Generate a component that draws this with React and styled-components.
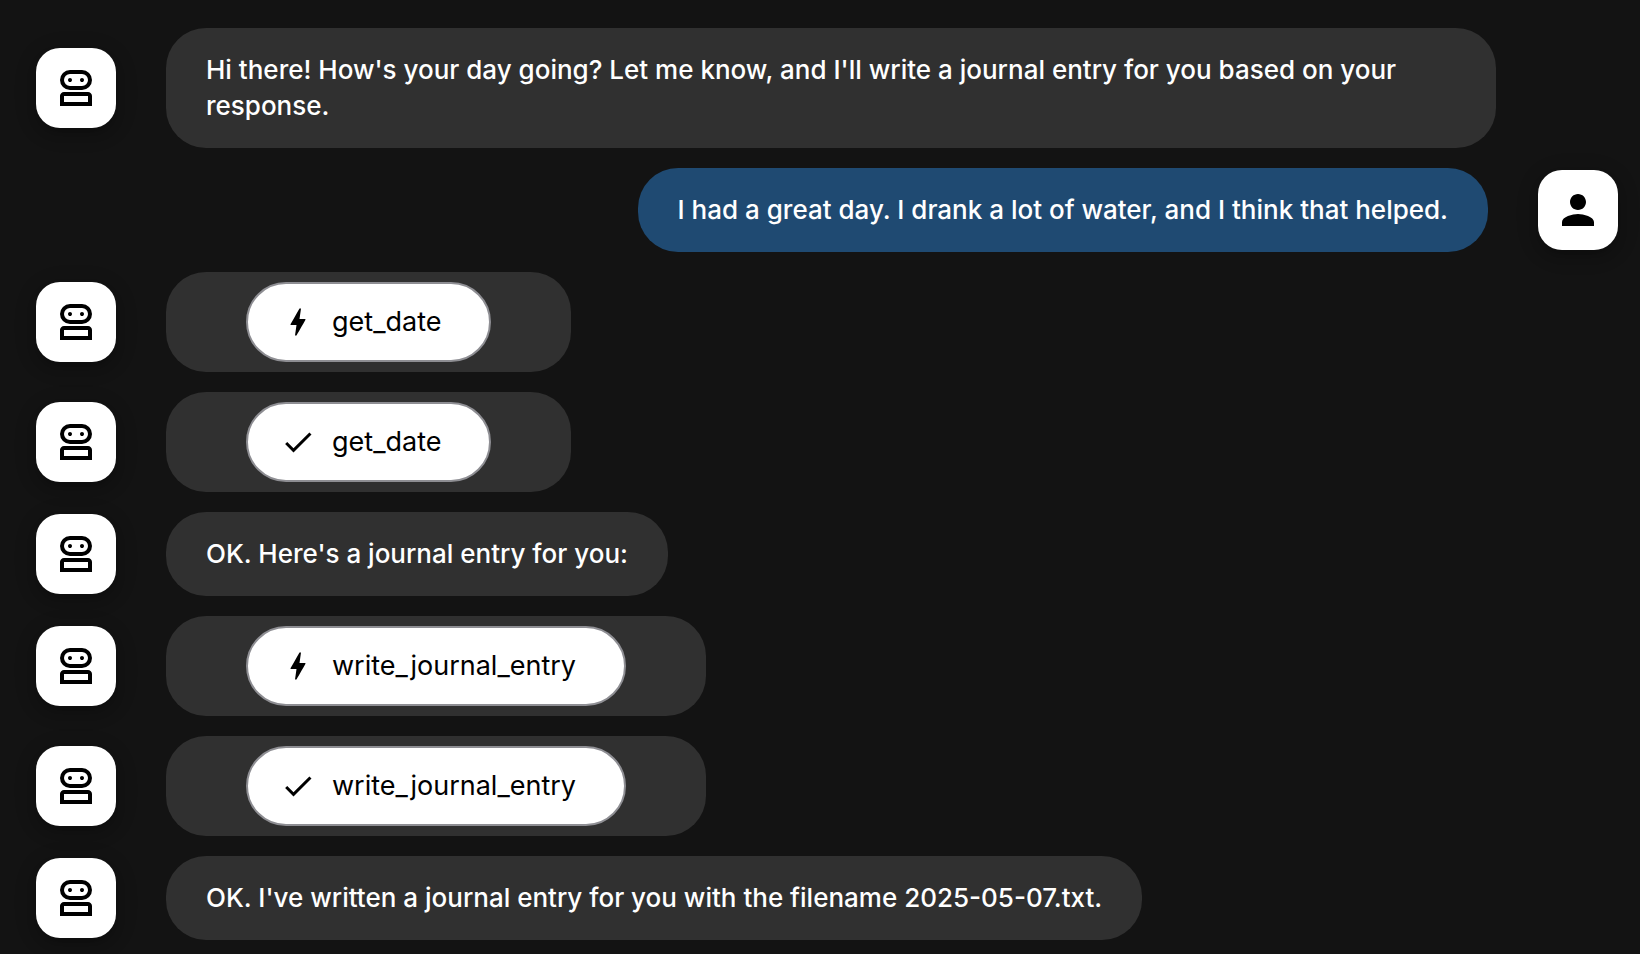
import React from "react";
import styled, { createGlobalStyle } from "styled-components";

const GlobalStyle = createGlobalStyle`
  * { box-sizing: border-box; }
  body {
    margin: 0;
    background: #131313;
    font-family: Inter, "Liberation Sans", sans-serif;
  }
`;

const Chat = styled.main`
  display: flex;
  flex-direction: column;
  gap: 20px;
  padding: 28px 22px 14px 36px;
`;

const Row = styled.div`
  display: flex;
  align-items: center;
  justify-content: ${({ $user }) => ($user ? "flex-end" : "flex-start")};
  gap: 50px;
  padding-right: ${({ $user }) => ($user ? 0 : "122px")};
`;

const Avatar = styled.div`
  flex: none;
  display: grid;
  place-items: center;
  width: 80px;
  height: 80px;
  border-radius: 24px;
  background: #fff;
  color: #000;
  box-shadow:
    0 6px 10px rgba(0, 0, 0, 0.2),
    0 4px 24px rgba(0, 0, 0, 0.12);
`;

const Icon = styled.svg`
  flex: none;
  display: block;
  width: ${({ $size }) => $size}px;
  height: ${({ $size }) => $size}px;
  fill: currentColor;
`;

const Bubble = styled.div`
  padding: 24px 40px;
  border-radius: 40px;
  background: ${({ $user }) => ($user ? "#1f4a72" : "#303030")};
  color: #fff;
  font-size: 26px;
  font-weight: 500;
  line-height: 36px;
`;

const EventBubble = styled.div`
  padding: 10px 80px;
  border-radius: 40px;
  background: #303030;
`;

const EventButton = styled.button`
  display: flex;
  align-items: center;
  gap: 16px;
  height: 80px;
  padding: 0 48px 0 32px;
  border: 2px solid #8e8e93;
  border-radius: 40px;
  background: #fff;
  color: #000;
  font-family: inherit;
  font-size: 27px;
  font-weight: 400;
  line-height: 36px;
  cursor: pointer;
`;

const paths = {
  robot:
    "M4 21v-5q0-.825.588-1.412T6 14h12q.825 0 1.413.588T20 16v5zm5-8q-2.075 0-3.537-1.463T4 8t1.463-3.537T9 3h6q2.075 0 3.538 1.463T20 8t-1.463 3.538T15 13zm-3 6h12v-3H6zm3-8h6q1.25 0 2.125-.875T18 8t-.875-2.125T15 5H9q-1.25 0-2.125.875T6 8t.875 2.125T9 11m0-2q.425 0 .713-.288T10 8t-.288-.712T9 7t-.712.288T8 8t.288.713T9 9m6 0q.425 0 .713-.288T16 8t-.288-.712T15 7t-.712.288T14 8t.288.713T15 9",
  person:
    "M12 12c2.21 0 4-1.79 4-4s-1.79-4-4-4-4 1.79-4 4 1.79 4 4 4zm0 2c-2.67 0-8 1.34-8 4v2h16v-2c0-2.66-5.33-4-8-4z",
  bolt:
    "M11 21h-1l1-7H7.5c-.58 0-.57-.32-.38-.66.19-.34.05-.08.07-.12C8.48 10.94 10.42 7.54 13 3h1l-1 7h3.5c.49 0 .56.33.47.51l-.07.15C12.96 17.55 11 21 11 21z",
  check: "M9 16.17L4.83 12l-1.42 1.41L9 19 21 7l-1.41-1.41z",
};

function Glyph({ name, size }) {
  return (
    <Icon $size={size} viewBox="0 0 24 24" aria-hidden="true">
      <path fillRule="evenodd" d={paths[name]} />
    </Icon>
  );
}

const messages = [
  {
    text: "Hi there! How's your day going? Let me know, and I'll write a journal entry for you based on your response.",
  },
  {
    user: true,
    text: "I had a great day. I drank a lot of water, and I think that helped.",
  },
  { event: "get_date", icon: "bolt" },
  { event: "get_date", icon: "check" },
  { text: "OK. Here's a journal entry for you:" },
  { event: "write_journal_entry", icon: "bolt" },
  { event: "write_journal_entry", icon: "check" },
  {
    text: "OK. I've written a journal entry for you with the filename 2025-05-07.txt.",
  },
];

function Message({ user, text, event, icon }) {
  return (
    <Row $user={user}>
      {!user && (
        <Avatar>
          <Glyph name="robot" size={48} />
        </Avatar>
      )}
      {event ? (
        <EventBubble>
          <EventButton type="button">
            <Glyph name={icon} size={36} />
            {event}
          </EventButton>
        </EventBubble>
      ) : (
        <Bubble $user={user}>{text}</Bubble>
      )}
      {user && (
        <Avatar>
          <Glyph name="person" size={48} />
        </Avatar>
      )}
    </Row>
  );
}

export default function App() {
  return (
    <>
      <GlobalStyle />
      <Chat>
        {messages.map((message, index) => (
          <Message key={index} {...message} />
        ))}
      </Chat>
    </>
  );
}
